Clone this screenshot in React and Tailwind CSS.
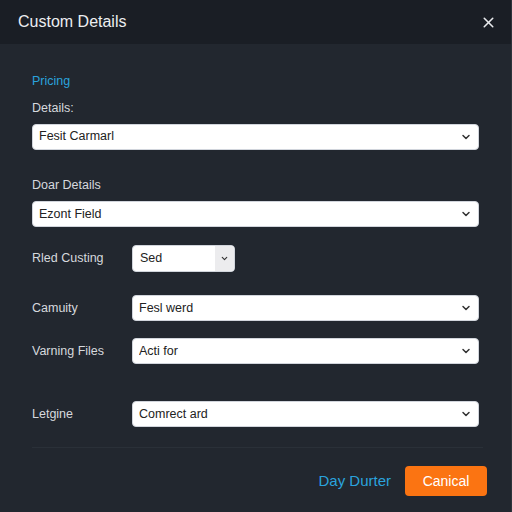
import React from "react";
import { ChevronDown, X } from "lucide-react";

const Select = ({ value, className = "" }) => (
  <div
    className={`flex items-center h-[26px] bg-white rounded-[4px] border border-gray-300 pl-[6px] pr-[6px] text-[12.5px] text-[#222] ${className}`}
  >
    <span className="flex-1 truncate">{value}</span>
    <ChevronDown size={12} strokeWidth={3} className="text-[#333]" />
  </div>
);

const Row = ({ label, value, className = "" }) => (
  <div className={`flex items-center ${className}`}>
    <span className="w-[100px] text-[12.5px] text-[#d6d9de]">{label}</span>
    <Select value={value} className="flex-1" />
  </div>
);

export default function App() {
  return (
    <div
      className="w-[512px] h-[512px] bg-[#22272f] flex flex-col border-r border-[#2e343c]"
      style={{ fontFamily: "'Liberation Sans', Arial, sans-serif" }}
    >
      <div className="h-[44px] bg-[#1a1e25] flex items-center justify-between pl-[18px] pr-[14px]">
        <span className="text-[16px] text-[#eceef1]">Custom Details</span>
        <X size={17} strokeWidth={2.2} className="text-[#e8eaed]" />
      </div>

      <div className="flex flex-col px-[32px] pr-[32px]">
        <span className="mt-[28px] text-[12.5px] text-[#2aa3dd]">Pricing</span>
        <span className="mt-[8px] text-[12.5px] text-[#d6d9de]">Details:</span>
        <Select value="Fesit Carmarl" className="mt-[6px]" />

        <span className="mt-[26px] text-[12.5px] text-[#d6d9de]">Doar Details</span>
        <Select value="Ezont Field" className="mt-[7px]" />

        <div className="flex items-center mt-[18px]">
          <span className="w-[100px] text-[12.5px] text-[#d6d9de]">Rled Custing</span>
          <div className="flex items-stretch h-[27px] w-[103px] bg-white rounded-[4px] border border-gray-300 overflow-hidden text-[12.5px] text-[#222]">
            <span className="flex-1 flex items-center pl-[7px]">Sed</span>
            <span className="w-[19px] bg-[#ececee] flex items-center justify-center">
              <ChevronDown size={9} strokeWidth={3} className="text-[#333]" />
            </span>
          </div>
        </div>

        <Row label="Camuity" value="Fesl werd" className="mt-[23px]" />
        <Row label="Varning Files" value="Acti for" className="mt-[17px]" />
        <Row label="Letgine" value="Comrect ard" className="mt-[37px]" />

        <div className="mt-[20px] h-px bg-[#2a3038] mr-[-4px]" />

        <div className="flex items-center justify-end mt-[18px] mr-[-8px] gap-[14px]">
          <span className="text-[15px] text-[#2aa3dd]">Day Durter</span>
          <button className="h-[30px] w-[82px] rounded-[4px] bg-[#fb7412] text-white text-[14px]">
            Canical
          </button>
        </div>
      </div>
    </div>
  );
}
